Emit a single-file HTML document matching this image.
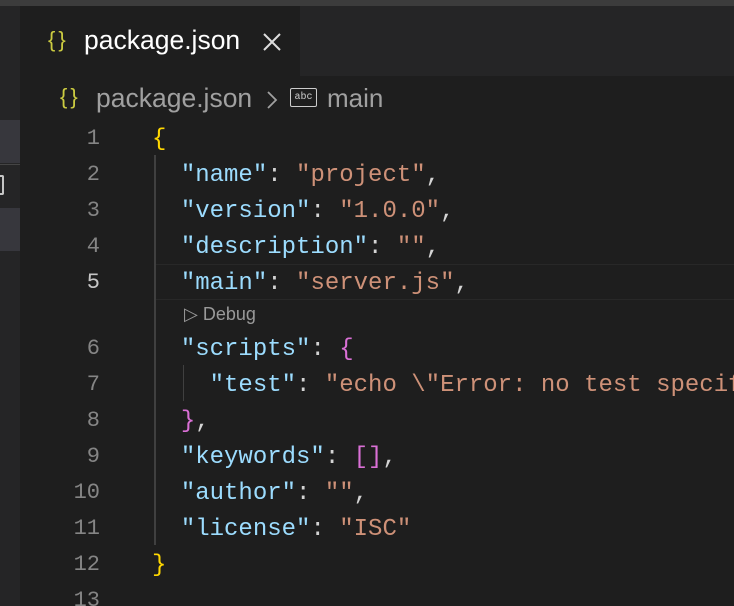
<!DOCTYPE html>
<html><head><style>
html,body{margin:0;width:734px;height:606px;overflow:hidden}
body{background:#1e1e1e;font-family:"Liberation Sans",sans-serif}
#w{position:relative;width:734px;height:606px;overflow:hidden}
.abs{position:absolute}
.code{font-family:"Liberation Mono",monospace;font-size:24px;white-space:pre;line-height:36px}
.k{color:#9cdcfe}.s{color:#ce9178}.p{color:#d4d4d4}.y{color:#ffd700}.m{color:#da70d6}
.ln{position:absolute;right:0;width:100px;text-align:right;color:#858585;font-family:"Liberation Mono",monospace;font-size:22px}
</style></head><body><div id="w">
<div class="abs" style="left:0;top:0;width:734px;height:6px;background:#3c3c3c"></div>
<div class="abs" style="left:0;top:6px;width:734px;height:70px;background:#252526"></div>
<div class="abs" style="left:20px;top:6px;width:280px;height:70px;background:#1e1e1e"></div>
<div class="abs" style="left:0;top:6px;width:20px;height:600px;background:#252526"></div>
<div class="abs" style="left:0;top:120px;width:20px;height:43px;background:#37373d"></div>
<div class="abs" style="left:0;top:164px;width:20px;height:1px;background:#454545"></div>
<div class="abs" style="left:0;top:175px;width:2px;height:16px;border:2px solid #c5c5c5;border-left:none;border-radius:0 2px 2px 0"></div>
<div class="abs" style="left:0;top:208px;width:20px;height:43px;background:#37373d"></div>

<div class="abs" style="left:48px;top:27px;color:#cbcb41;font-size:22px;letter-spacing:3px">{}</div>
<div class="abs" style="left:84px;top:25px;color:#fff;font-size:26.5px">package.json</div>
<svg class="abs" style="left:262px;top:32px" width="20" height="20"><path d="M2 2L18 18M18 2L2 18" stroke="#ddd" stroke-width="2"/></svg>

<div class="abs" style="left:60px;top:84px;color:#cbcb41;font-size:22px;letter-spacing:3px">{}</div>
<div class="abs" style="left:96px;top:83px;color:#a0a0a0;font-size:26.5px">package.json</div>
<svg class="abs" style="left:265px;top:90px" width="14" height="20"><path d="M3 2L11 10L3 18" stroke="#a0a0a0" stroke-width="1.8" fill="none"/></svg>
<div class="abs" style="left:290px;top:88px;width:25px;height:17px;border:1.5px solid #ccc;border-radius:2px;color:#ccc;font-size:10px;font-family:'Liberation Mono',monospace;text-align:center;line-height:17px">abc</div>
<div class="abs" style="left:327px;top:83px;color:#a0a0a0;font-size:26px">main</div>

<div class="abs" style="left:154px;top:264px;width:580px;height:34px;border-top:1px solid #282828;border-bottom:1px solid #282828;border-left:2px solid #3a3a3a"></div>
<div class="abs" style="left:154px;top:155px;width:2px;height:390px;background:#404040"></div>
<div class="abs" style="left:183px;top:365px;width:1px;height:36px;background:#404040"></div>

<div class="ln" style="left:0;top:121px;line-height:36px">1</div>
<div class="ln" style="left:0;top:157px;line-height:36px">2</div>
<div class="ln" style="left:0;top:193px;line-height:36px">3</div>
<div class="ln" style="left:0;top:229px;line-height:36px">4</div>
<div class="ln" style="left:0;top:265px;line-height:36px;color:#c6c6c6">5</div>
<div class="ln" style="left:0;top:331px;line-height:36px">6</div>
<div class="ln" style="left:0;top:367px;line-height:36px">7</div>
<div class="ln" style="left:0;top:403px;line-height:36px">8</div>
<div class="ln" style="left:0;top:439px;line-height:36px">9</div>
<div class="ln" style="left:0;top:475px;line-height:36px">10</div>
<div class="ln" style="left:0;top:511px;line-height:36px">11</div>
<div class="ln" style="left:0;top:547px;line-height:36px">12</div>
<div class="ln" style="left:0;top:583px;line-height:36px">13</div>

<div class="abs code" style="left:152px;top:122px"><span class="y">{</span>
<span class="p">  </span><span class="k">"name"</span><span class="p">: </span><span class="s">"project"</span><span class="p">,</span>
<span class="p">  </span><span class="k">"version"</span><span class="p">: </span><span class="s">"1.0.0"</span><span class="p">,</span>
<span class="p">  </span><span class="k">"description"</span><span class="p">: </span><span class="s">""</span><span class="p">,</span>
<span class="p">  </span><span class="k">"main"</span><span class="p">: </span><span class="s">"server.js"</span><span class="p">,</span></div>
<div class="abs" style="left:184px;top:304px;color:#999;font-size:18px">▷ Debug</div>
<div class="abs code" style="left:152px;top:332px;width:582px;overflow:hidden"><span class="p">  </span><span class="k">"scripts"</span><span class="p">: </span><span class="m">{</span>
<span class="p">    </span><span class="k">"test"</span><span class="p">: </span><span class="s">"echo \"Error: no test specified</span>
<span class="p">  </span><span class="m">}</span><span class="p">,</span>
<span class="p">  </span><span class="k">"keywords"</span><span class="p">: </span><span class="m">[]</span><span class="p">,</span>
<span class="p">  </span><span class="k">"author"</span><span class="p">: </span><span class="s">""</span><span class="p">,</span>
<span class="p">  </span><span class="k">"license"</span><span class="p">: </span><span class="s">"ISC"</span>
<span class="y">}</span></div>
</div></body></html>
